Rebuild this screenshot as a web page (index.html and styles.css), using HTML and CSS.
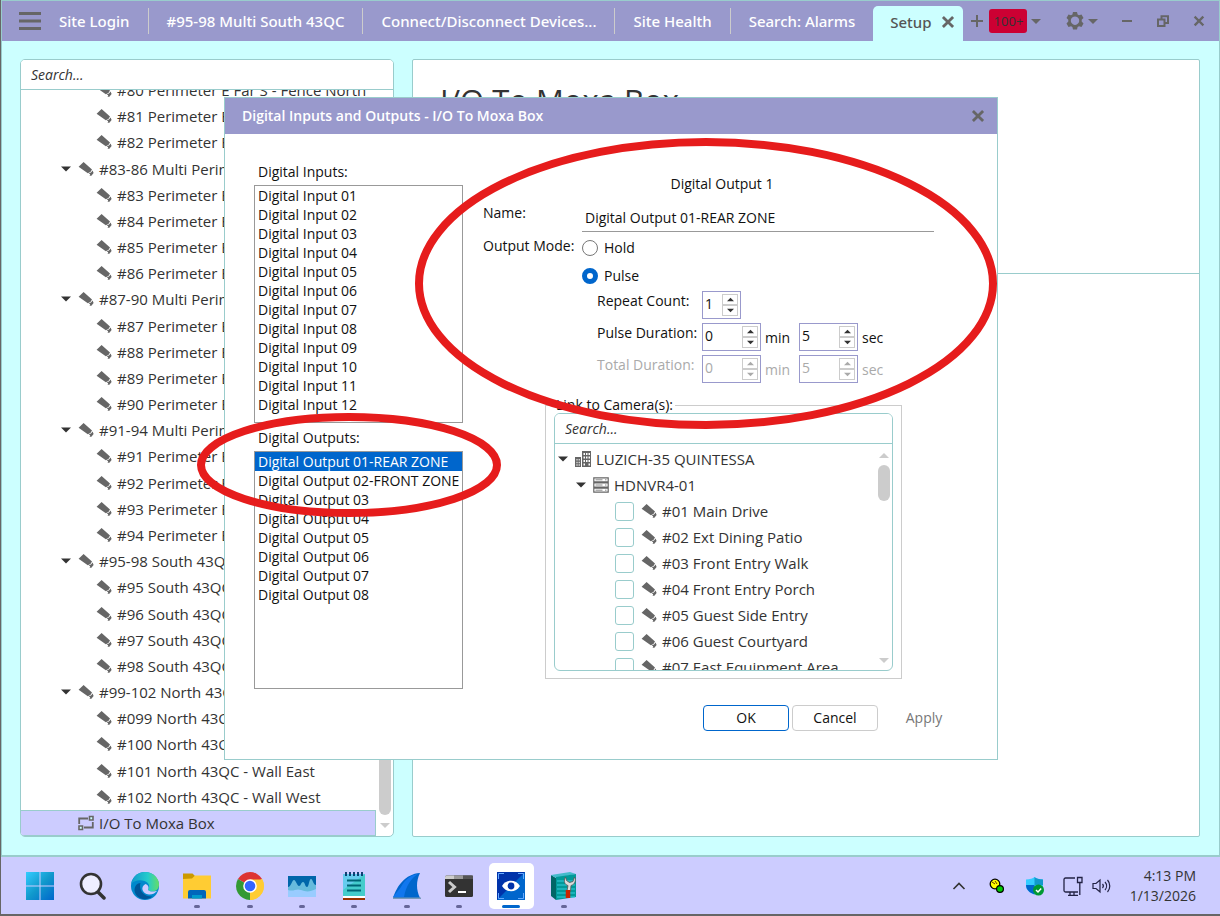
FILE: index.html
```html
<!DOCTYPE html>
<html lang="en">
<head>
<meta charset="utf-8">
<meta name="viewport" content="width=device-width, initial-scale=1">
<title>Setup</title>
<link rel="stylesheet" href="styles.css">
</head>
<body>
<svg class="sprite" aria-hidden="true">
  <symbol id="cam" viewBox="0 0 16 16"><path d="M5.600 1 L14 8.600 L12.400 11 L9.800 12.200 L.6 5.800 Z M14.600 9.600 L15.600 12 L13.400 14.800 L11.600 14.800 L12.200 13.200 L10.600 12.600 L13 11.600 Z" fill="#666"/></symbol>
  <symbol id="caret" viewBox="0 0 10 6"><path d="M0 .5H10L5 5.500Z"/></symbol>
  <symbol id="up" viewBox="0 0 10 6"><path d="M0 5.500H10L5 .5Z"/></symbol>
  <symbol id="cross" viewBox="0 0 12 12"><path d="M2.500 2.500L9.500 9.500M9.500 2.500L2.500 9.500" stroke="#666" stroke-width="2.400" stroke-linecap="square" fill="none"/></symbol>
</svg>

<div class="window">
  <header class="topbar">
    <button class="menu" aria-label="Menu"><svg width="22" height="18" viewBox="0 0 22 18"><path d="M0 1.500H22M0 9H22M0 16.500H22" stroke="#666" stroke-width="3"/></svg></button>
    <nav class="tabs">
      <a href="#">Site Login</a>
      <a href="#">#95-98 Multi South 43QC</a>
      <a href="#">Connect/Disconnect Devices...</a>
      <a href="#">Site Health</a>
      <a href="#">Search: Alarms</a>
      <a href="#" class="active">Setup <svg width="14" height="14"><use href="#cross"/></svg></a>
    </nav>
    <button class="tool" aria-label="New tab"><svg width="14" height="14" viewBox="0 0 14 14"><path d="M7 1V13M1 7H13" stroke="#666" stroke-width="2"/></svg></button>
    <button class="alarms">100+</button>
    <button class="tool caret" aria-label="Alarm list"><svg width="10" height="7"><use href="#caret"/></svg></button>
    <div class="controls">
      <button class="tool gear" aria-label="Settings"><svg width="20" height="20" viewBox="0 0 20 20"><path fill="#666" fill-rule="evenodd" d="M8 1h4l.6 2.500 1.400.8 2.500-.8 2 3.400L16.700 8.700v1.900l1.800 1.900-2 3.400-2.500-.7-1.400.8L12 18.500H8L7.400 16 6 15.200l-2.500.7-2-3.400 1.800-1.900V8.700L1.500 6.900l2-3.400 2.500.8 1.400-.8Z M10 5.500a4.200 4.200 0 1 0 .01 0Z"/></svg><svg width="10" height="7"><use href="#caret"/></svg></button>
      <button class="tool" aria-label="Minimize"><svg width="12" height="12" viewBox="0 0 12 12"><path d="M1 6H11" stroke="#666" stroke-width="2"/></svg></button>
      <button class="tool" aria-label="Restore"><svg width="14" height="14" viewBox="0 0 14 14"><path d="M2 5.500H8.500V12H2ZM5.500 5V2.200H12V9H9" stroke="#666" stroke-width="2" fill="none"/></svg></button>
      <button class="tool" aria-label="Close"><svg width="12" height="12"><use href="#cross"/></svg></button>
    </div>
  </header>

  <main class="workspace">
    <aside class="panel sidebar">
      <input class="search" type="search" placeholder="Search..." aria-label="Search sites">
      <div class="sidebody">
        <ul class="tree">
          <li><svg><use href="#cam"/></svg>#80 Perimeter E Far S - Fence North</li>
          <li><svg><use href="#cam"/></svg>#81 Perimeter E</li>
          <li><svg><use href="#cam"/></svg>#82 Perimeter E</li>
          <li class="group"><svg class="fold"><use href="#caret"/></svg><svg><use href="#cam"/></svg>#83-86 Multi Perimeter</li>
          <li><svg><use href="#cam"/></svg>#83 Perimeter E</li>
          <li><svg><use href="#cam"/></svg>#84 Perimeter E</li>
          <li><svg><use href="#cam"/></svg>#85 Perimeter E</li>
          <li><svg><use href="#cam"/></svg>#86 Perimeter E</li>
          <li class="group"><svg class="fold"><use href="#caret"/></svg><svg><use href="#cam"/></svg>#87-90 Multi Perimeter</li>
          <li><svg><use href="#cam"/></svg>#87 Perimeter E</li>
          <li><svg><use href="#cam"/></svg>#88 Perimeter E</li>
          <li><svg><use href="#cam"/></svg>#89 Perimeter E</li>
          <li><svg><use href="#cam"/></svg>#90 Perimeter E</li>
          <li class="group"><svg class="fold"><use href="#caret"/></svg><svg><use href="#cam"/></svg>#91-94 Multi Perimeter</li>
          <li><svg><use href="#cam"/></svg>#91 Perimeter E</li>
          <li><svg><use href="#cam"/></svg>#92 Perimeter E</li>
          <li><svg><use href="#cam"/></svg>#93 Perimeter E</li>
          <li><svg><use href="#cam"/></svg>#94 Perimeter E</li>
          <li class="group"><svg class="fold"><use href="#caret"/></svg><svg><use href="#cam"/></svg>#95-98 South 43QC</li>
          <li><svg><use href="#cam"/></svg>#95 South 43QC</li>
          <li><svg><use href="#cam"/></svg>#96 South 43QC</li>
          <li><svg><use href="#cam"/></svg>#97 South 43QC</li>
          <li><svg><use href="#cam"/></svg>#98 South 43QC</li>
          <li class="group"><svg class="fold"><use href="#caret"/></svg><svg><use href="#cam"/></svg>#99-102 North 43QC</li>
          <li><svg><use href="#cam"/></svg>#099 North 43QC</li>
          <li><svg><use href="#cam"/></svg>#100 North 43QC</li>
          <li><svg><use href="#cam"/></svg>#101 North 43QC - Wall East</li>
          <li><svg><use href="#cam"/></svg>#102 North 43QC - Wall West</li>
          <li class="group io"><svg viewBox="0 0 16 16"><path d="M1.200 9V3.500H10M14.800 7V12.500H6" fill="none" stroke="#666" stroke-width="1.800"/><path d="M11.500 1.500h3.500v3.500h-3.500ZM1 11h3.500v3.500H1Z" fill="#cff" stroke="#666" stroke-width="1.600"/></svg>I/O To Moxa Box</li>
        </ul>
        <div class="scroll"><span class="thumb"></span><svg width="10" height="7"><use href="#caret"/></svg></div>
      </div>
    </aside>
    <section class="panel detail"><header><h1>I/O To Moxa Box</h1></header></section>
  </main>
</div>

<section class="dialog" role="dialog" aria-labelledby="dlg-title">
  <header class="dlg-head"><h2 id="dlg-title">Digital Inputs and Outputs - I/O To Moxa Box</h2><button aria-label="Close dialog"><svg width="14" height="14"><use href="#cross"/></svg></button></header>
  <form class="dlg-body">
    <div class="lists">
      <label for="inputs">Digital Inputs:</label>
      <select id="inputs" size="12">
        <option>Digital Input 01</option><option>Digital Input 02</option><option>Digital Input 03</option><option>Digital Input 04</option><option>Digital Input 05</option><option>Digital Input 06</option><option>Digital Input 07</option><option>Digital Input 08</option><option>Digital Input 09</option><option>Digital Input 10</option><option>Digital Input 11</option><option>Digital Input 12</option>
      </select>
      <label for="outputs">Digital Outputs:</label>
      <select id="outputs" size="12">
        <option selected>Digital Output 01-REAR ZONE</option><option>Digital Output 02-FRONT ZONE</option><option>Digital Output 03</option><option>Digital Output 04</option><option>Digital Output 05</option><option>Digital Output 06</option><option>Digital Output 07</option><option>Digital Output 08</option>
      </select>
    </div>
    <div class="settings">
      <h3>Digital Output 1</h3>
      <div class="row name"><label for="name">Name:</label><input id="name" type="text" value="Digital Output 01-REAR ZONE"></div>
      <div class="row mode" role="radiogroup" aria-labelledby="mode-label">
        <span id="mode-label">Output Mode:</span>
        <div class="radios">
          <label><input type="radio" name="mode">Hold</label>
          <label><input type="radio" name="mode" checked>Pulse</label>
        </div>
      </div>
      <div class="durations">
        <div class="row"><label for="repeat">Repeat Count:</label>
          <span class="spin small"><input id="repeat" type="number" value="1"><span class="arrows"><button type="button" aria-label="Increase"><svg><use href="#up"/></svg></button><button type="button" aria-label="Decrease"><svg><use href="#caret"/></svg></button></span></span></div>
        <div class="row"><label for="pmin">Pulse Duration:</label>
          <span class="spin"><input id="pmin" type="number" value="0"><span class="arrows"><button type="button" aria-label="Increase"><svg><use href="#up"/></svg></button><button type="button" aria-label="Decrease"><svg><use href="#caret"/></svg></button></span></span>
          <span class="unit">min</span>
          <span class="spin"><input aria-label="Pulse seconds" type="number" value="5"><span class="arrows"><button type="button" aria-label="Increase"><svg><use href="#up"/></svg></button><button type="button" aria-label="Decrease"><svg><use href="#caret"/></svg></button></span></span>
          <span class="unit">sec</span></div>
        <div class="row off"><label for="tmin">Total Duration:</label>
          <span class="spin"><input id="tmin" type="number" value="0" disabled><span class="arrows"><button type="button" disabled aria-label="Increase"><svg><use href="#up"/></svg></button><button type="button" disabled aria-label="Decrease"><svg><use href="#caret"/></svg></button></span></span>
          <span class="unit">min</span>
          <span class="spin"><input aria-label="Total seconds" type="number" value="5" disabled><span class="arrows"><button type="button" disabled aria-label="Increase"><svg><use href="#up"/></svg></button><button type="button" disabled aria-label="Decrease"><svg><use href="#caret"/></svg></button></span></span>
          <span class="unit">sec</span></div>
      </div>
      <fieldset>
        <legend>Link to Camera(s):</legend>
        <div class="cameras">
          <input class="search" type="search" placeholder="Search..." aria-label="Search cameras">
          <div class="cambody">
            <ul class="camtree">
              <li class="site"><svg class="fold"><use href="#caret"/></svg><svg viewBox="0 0 16 16"><path d="M7 0h9v16H7ZM0 6h6v10H0Z" fill="#666"/><path d="M8.500 2h1.500v2H8.500zM11 2h1.500v2H11zM13.500 2H15v2h-1.500zM8.500 5.500h1.500v2H8.500zM11 5.500h1.500v2H11zM13.500 5.500H15v2h-1.500zM8.500 9h1.500v2H8.500zM11 9h1.500v2H11zM13.500 9H15v2h-1.500zM8.500 12.500h1.500v2H8.500zM13.500 12.500H15v2h-1.500zM1.500 8h1v1.500h-1zM3.700 8h1v1.500h-1zM1.500 10.700h1v1.500h-1zM3.700 10.700h1v1.500h-1zM1.500 13.300h1v1.500h-1zM3.700 13.300h1v1.500h-1z" fill="#fff"/></svg>LUZICH-35 QUINTESSA</li>
              <li class="server"><svg class="fold"><use href="#caret"/></svg><svg viewBox="0 0 16 16"><path d="M.8 .8h14.400v4H.8ZM.8 6h14.400v4H.8ZM.8 11.200h14.400v4H.8Z" fill="#fff" stroke="#666" stroke-width="1.200"/><path d="M2.500 2.800H9.500M2.500 8H9.500M2.500 13.200H9.500M12 2.800h1.500M12 8h1.500M12 13.200h1.500" stroke="#888"/></svg>HDNVR4-01</li>
              <li><label><input type="checkbox"><svg><use href="#cam"/></svg>#01 Main Drive</label></li>
              <li><label><input type="checkbox"><svg><use href="#cam"/></svg>#02 Ext Dining Patio</label></li>
              <li><label><input type="checkbox"><svg><use href="#cam"/></svg>#03 Front Entry Walk</label></li>
              <li><label><input type="checkbox"><svg><use href="#cam"/></svg>#04 Front Entry Porch</label></li>
              <li><label><input type="checkbox"><svg><use href="#cam"/></svg>#05 Guest Side Entry</label></li>
              <li><label><input type="checkbox"><svg><use href="#cam"/></svg>#06 Guest Courtyard</label></li>
              <li><label><input type="checkbox"><svg><use href="#cam"/></svg>#07 East Equipment Area</label></li>
            </ul>
            <div class="scroll"><svg width="10" height="7"><use href="#up"/></svg><span class="thumb"></span><svg class="down" width="10" height="7"><use href="#caret"/></svg></div>
          </div>
        </div>
      </fieldset>
      <div class="actions"><button type="button" class="ok">OK</button><button type="button">Cancel</button><button type="button" class="apply" disabled>Apply</button></div>
    </div>
  </form>
  <svg class="marks" viewBox="0 0 774 663" aria-hidden="true"><g fill="none" stroke="#e61c1c" stroke-width="8"><ellipse cx="482" cy="186.500" rx="287" ry="141.500"/><ellipse cx="125" cy="368" rx="148" ry="48"/></g></svg>
</section>

<footer class="taskbar">
  <div class="apps">
    <button aria-label="Start"><svg viewBox="0 0 28 28"><defs><linearGradient id="w" x1="0" y1="0" x2="1" y2="1"><stop offset="0" stop-color="#3cf"/><stop offset=".5" stop-color="#19c"/><stop offset="1" stop-color="#06c"/></linearGradient></defs><path d="M0 0H13.500V13.500H0ZM14.500 0H28V13.500H14.500ZM0 14.500H13.500V28H0ZM14.500 14.500H28V28H14.500Z" fill="url(#w)"/></svg></button>
    <button aria-label="Search"><svg viewBox="0 0 28 28"><path d="M18.500 19.500L25 26" stroke="#333" stroke-width="3.500" stroke-linecap="round"/><circle cx="12" cy="12" r="10" fill="#eef" stroke="#333" stroke-width="2.600"/></svg></button>
    <button aria-label="Edge"><svg viewBox="0 0 28 28"><defs><linearGradient id="e" x1="0" x2="1"><stop offset="0" stop-color="#19c"/><stop offset=".6" stop-color="#2cc"/><stop offset="1" stop-color="#6d6"/></linearGradient></defs><circle cx="14" cy="14" r="14" fill="#08c"/><path d="M.3 12C1.500 4 7.500 0 14 0c8 0 14 6 14 12.500 0 4.500-3 7-7 7-3.500 0-4.500-1.500-3.500-3 1.500-2 .5-6-4-7.500C8.500 7.500 3 8.500.3 12Z" fill="url(#e)"/><path d="M9.500 11C7.500 17 12 25 21.500 24.500 14 30 4.500 26.500 3.500 18.500 3.500 14 6 11 9.500 11Z" fill="#059"/><path d="M14.500 12C9 14.500 11 22 18 22.500c3.500.2 6.500-1.500 8.500-4-3 1.500-9 1.500-9.500-1 1.200-2 .5-4.500-2.500-5.500Z" fill="#ccf"/></svg></button>
    <button class="run" aria-label="File Explorer"><svg viewBox="0 0 28 28"><path d="M0 1.500H9.500L12 4V9H0Z" fill="#c90"/><path d="M0 7L9 6.500 12 3.500H28V26.500H0Z" fill="#fc3"/><path d="M5 26.500V20a2 2 0 0 1 2-2H21a2 2 0 0 1 2 2V26.500Z" fill="#06b"/><path d="M9 26.500V23H19v3.500Z" fill="#09c"/></svg></button>
    <button class="run" aria-label="Chrome"><svg viewBox="0 0 28 28"><path d="M14 14L1.900 7A14 14 0 0 1 26.100 7Z" fill="#d33"/><path d="M14 14L26.100 7A14 14 0 0 1 14 28Z" fill="#fc3"/><path d="M14 14L14 28A14 14 0 0 1 1.900 7Z" fill="#393"/><path d="M14 7.500H26.300A14 14 0 0 1 14 28L19.600 17.300Z" fill="#fc3"/><circle cx="14" cy="14" r="6.800" fill="#fff"/><circle cx="14" cy="14" r="5.300" fill="#36f"/></svg></button>
    <button class="run" aria-label="Monitor"><svg viewBox="0 0 28 28"><path d="M0 4H28V25H0Z" fill="#06a"/><path d="M0 15C3 15 4 8 6 8S9 14 11 14 13 10 15 10 17 15 19 15 21 7 23 7 25 13 28 13V25H0Z" fill="#6bd"/><path d="M0 18C6 20 8 16 13 18S22 20 28 17V25H0Z" fill="#9cf"/></svg></button>
    <button class="run" aria-label="Notepad"><svg viewBox="0 0 28 28"><path d="M3 2H25V24H3Z" fill="#4cc"/><path d="M3 2H25L3 18Z" fill="#6ce"/><path d="M6 0V4M10 0V4M14 0V4M18 0V4M22 0V4" stroke="#036" stroke-width="1.800"/><path d="M7 8.500H21M7 13.500H21M7 18.500H21" stroke="#067" stroke-width="2"/><path d="M3 24H25V26H3Z" fill="#fff"/><path d="M3 26H25V28H3Z" fill="#930"/></svg></button>
    <button class="run" aria-label="Wireshark"><svg viewBox="0 0 28 28"><path d="M0 26C4 14 12 2 27 1 23 9 23 18 27 26Z" fill="#06c"/><path d="M8 15C12 7 18 3 25 2 18 6 13 14 11 25H0Z" fill="#17e"/><path d="M0 25.500H28V27H0Z" fill="#79b"/></svg></button>
    <button class="run" aria-label="Terminal"><svg viewBox="0 0 28 28"><rect y="3.500" width="28" height="21.500" rx="1.500" fill="#333"/><path d="M0 7V5a1.500 1.500 0 0 1 1.500-1.500H9V7Z" fill="#ccc"/><path d="M9 3.500H18V7H9Z" fill="#999"/><path d="M18 3.500H28V7H18Z" fill="#555"/><path d="M4 10L9.500 15 4 20" fill="none" stroke="#ccc" stroke-width="3"/><path d="M13 20H21" stroke="#fff" stroke-width="2"/></svg></button>
    <button class="run current" aria-label="Video client"><svg viewBox="0 0 28 28"><rect width="28" height="28" fill="#03a"/><path d="M28 0V28H0Z" fill="#06c"/><path d="M1.500 7V1.500H7M21 1.500h5.500V7M26.500 21v5.500H21M7 26.500H1.500V21" fill="none" stroke="#6af"/><path d="M5 14C9 7 19 7 23 14 19 21 9 21 5 14Z" fill="#fff"/><circle cx="14" cy="14" r="3.400" fill="#03a"/></svg></button>
    <button class="run" aria-label="Server tools"><svg viewBox="0 0 28 28"><path d="M1 3L6 6V28L1 24Z" fill="#066"/><path d="M1 3L20 0 26 2 6 6Z" fill="#4bc"/><path d="M6 5L26 2V25L6 28Z" fill="#099"/><path d="M7 9H25M7 13H25M7 17H25M7 21H25M7 25H25" stroke="#3cd"/><path d="M15.500 5C13 9 15 13 18 13.500L17 19H20.500L21 13.500C25 12.500 26.500 8 24.500 5L23 9.500 19.500 10.500 16.500 8.500Z" fill="#ddd" stroke="#555" stroke-width=".8"/><path d="M18 18V26" stroke="#c20" stroke-width="4.500"/></svg></button>
  </div>
  <div class="tray">
    <button aria-label="Show hidden icons"><svg viewBox="0 0 20 20"><path d="M4.500 13L10 7.500 15.500 13" fill="none" stroke="#333" stroke-width="1.600"/></svg></button>
    <button aria-label="Status"><svg viewBox="0 0 20 20"><circle cx="8" cy="8" r="4.800" fill="#ff0" stroke="#000" stroke-width="1.300"/><path d="M5 6l3 2M8 5l2 3" stroke="#630" fill="none"/><circle cx="13" cy="13" r="3.400" fill="#0c0" stroke="#000" stroke-width="1.200"/></svg></button>
    <button aria-label="Security"><svg viewBox="0 0 20 20"><path d="M1 3.500C5 3.500 8 2.500 9.500 1 11 2.500 14 3.500 18 3.500V9C18 14 14 17 9.500 18.500 5 17 1 14 1 9Z" fill="#3cf"/><path d="M9.500 1C11 2.500 14 3.500 18 3.500V9H9.500Z" fill="#19c"/><path d="M1 9H9.500V18.500C5 17 1 14 1 9Z" fill="#06c"/><circle cx="13.500" cy="14" r="5.500" fill="#093"/><path d="M11 14L13 16 16.200 12.500" fill="none" stroke="#fff" stroke-width="1.500"/></svg></button>
    <button aria-label="Network"><svg viewBox="0 0 20 20"><path d="M12 2H2.500a1.500 1.500 0 0 0-1.500 1.500V14.500A1.500 1.500 0 0 0 2.500 16H15M7 16V19M11 16V19M5 19.300H15M14.500 1.500H19V6.500H14.500ZM16.800 6.500V19" fill="none" stroke="#224" stroke-width="1.300"/></svg></button>
    <button aria-label="Volume"><svg viewBox="0 0 20 20"><path d="M1 7.500H4L8 4V16L4 12.500H1ZM10.500 8a3 3 0 0 1 0 4M13 6a6 6 0 0 1 0 8M15.500 4a9 9 0 0 1 0 12" fill="none" stroke="#224" stroke-width="1.200"/></svg></button>
    <div class="clock"><time>4:13 PM</time><time>1/13/2026</time></div>
  </div>
</footer>
</body>
</html>
```
FILE: styles.css
```css
*, *::before, *::after { box-sizing: border-box; }

body {
  margin: 0;
  min-height: 100vh;
  display: flex;
  flex-direction: column;
  position: relative;
  border-left: 1px solid #666;
  border-bottom: 2px solid #666;
  background: #ccf;
  color: #333;
  font: 14px/20px "Open Sans", "Noto Sans", sans-serif;
}

button, input, select { font: inherit; color: inherit; }
button { border: 0; padding: 0; background: none; }
ul { list-style: none; margin: 0; padding: 0; }
h1, h2, h3 { margin: 0; font-weight: 400; }
a { color: inherit; text-decoration: none; }
svg { flex: none; fill: #666; }
.sprite { display: none; }

.window {
  flex: 1;
  display: flex;
  flex-direction: column;
  border: 1px solid #9cc;
  border-bottom-width: 2px;
  background: #cff;
}

/* Top bar */
.topbar { display: flex; align-items: center; height: 40px; background: #99c; }
.menu { display: flex; margin-left: 17px; }
.tabs { display: flex; align-self: stretch; align-items: center; color: #fff; font-family: "Noto Sans", "Open Sans", sans-serif; font-size: 15px; font-weight: 500; }
.tabs a { padding: 3px 18px; border-right: 1px solid #ccc; white-space: nowrap; }
.tabs a:nth-child(5) { border-right: 0; }
.tabs .active {
  display: flex;
  align-items: center;
  gap: 10px;
  align-self: flex-end;
  height: 35px;
  padding: 0 8px 3px 17px;
  border: 0;
  border-radius: 5px 5px 0 0;
  background: #cff;
  color: #555;
}
.tool { display: flex; align-items: center; margin-left: 7px; }
.alarms { width: 38px; height: 24px; margin-left: 5px; border-radius: 3px; background: #c03; color: #333; font-size: 13px; }
.tool.caret { margin-left: 4px; }
.controls { display: flex; align-items: center; gap: 23px; margin-left: auto; padding-right: 14px; }
.controls .tool { margin: 0; }
.controls .gear { gap: 3px; }

/* Workspace */
.workspace { flex: 1; display: flex; gap: 18px; padding: 18px 19px 18px 18px; }
.panel { border: 1px solid #9cc; border-radius: 5px; background: #fff; overflow: hidden; }
.sidebar { width: 374px; display: flex; flex-direction: column; }
.search { display: block; width: 100%; height: 30px; padding: 0 10px; border: 0; border-bottom: 1px solid #9cc; background: #fff; font-style: italic; outline: 0; appearance: none; flex: none; }
.search::placeholder { color: #333; opacity: 1; }
.sidebody { flex: 1 1 0; min-height: 0; display: flex; align-items: flex-end; overflow: hidden; }
.tree { flex: 1; height: 759px; display: grid; grid-auto-rows: 1fr; font-size: 15px; }
.tree li { display: flex; align-items: center; gap: 5px; padding-left: 75px; white-space: nowrap; }
.tree li svg, .camtree li svg { width: 16px; height: 16px; }
.tree .group { padding-left: 40px; }
.tree li .fold, .camtree li .fold { width: 10px; height: 6px; fill: #333; }
.tree .fold + svg { margin-left: 2px; }
.tree .io { padding-left: 57px; border: 1px solid #9cc; border-left: 0; background: #ccf; }
.scroll { flex: none; width: 17px; align-self: stretch; display: flex; flex-direction: column; align-items: center; }
.scroll svg { fill: #ccc; margin: 7px 0; }
.thumb { width: 12px; border-radius: 6px; background: #ccc; }
.sidebar .thumb { flex: none; height: 300px; margin-top: auto; }
.detail { flex: 1; border-radius: 2px; }
.detail header { height: 214px; padding: 20px 27px; border-bottom: 1px solid #9cc; }
.detail h1 { font-size: 31px; line-height: 40px; }

/* Dialog */
.dialog { position: absolute; left: 223px; top: 97px; width: 774px; border: 1px solid #9cc; background: #fff; color: #111; }
.dlg-head { display: flex; align-items: center; justify-content: space-between; height: 36px; padding: 0 12px 0 17px; background: #99c; color: #fff; }
.dlg-head h2 { font-size: 14px; font-weight: 600; }
.dlg-head button { display: flex; }
.dlg-body { display: grid; grid-template-columns: 209px 1fr; gap: 20px; padding: 28px 30px 28px 29px; }
.lists { display: flex; flex-direction: column; }
.lists label { padding-left: 4px; }
.lists select { height: 238px; margin: 3px 0 5px; padding: 0; border: 1px solid #999; border-radius: 0; background: #fff; color: #111; outline: 0; overflow: hidden; }
.lists option { height: 19px; min-height: 19px; padding: 0 3px; line-height: 19px; }
.lists option:checked { background: #06c linear-gradient(#06c, #06c); color: #fff; }

.settings { display: flex; flex-direction: column; padding-top: 12px; }
.settings h3 { padding-right: 6px; font-size: 14px; text-align: center; }
.row { display: flex; align-items: flex-start; }
.name { margin-top: 9px; }
.name label, .mode > span { flex: 0 0 99px; }
.name input { width: 352px; height: 29px; padding: 0 3px; border: 0; border-bottom: 1px solid #999; background: none; outline: 0; }
.mode { margin-top: 4px; }
.radios { display: grid; gap: 8px; padding-top: 2px; }
.radios label { display: flex; align-items: center; gap: 6px; }
.radios input { appearance: none; width: 16px; height: 16px; margin: 0; border: 1px solid #777; border-radius: 50%; background: #fff; }
.radios input:checked { border: 5px solid #06c; }
.durations { display: grid; gap: 4px; margin: 5px 0 0 114px; }
.durations label { width: 105px; white-space: nowrap; }
.spin { display: flex; width: 59px; height: 28px; padding: 2px 2px 2px 0; border: 1px solid #99c; background: #fff; }
.spin.small { width: 39px; }
.spin input { flex: 1; min-width: 0; height: 20px; padding: 0 0 0 2px; border: 0; background: none; outline: 0; appearance: textfield; }
.spin input::-webkit-inner-spin-button { appearance: none; margin: 0; }
.arrows { display: grid; grid-template-rows: 11px 11px; width: 16px; }
.arrows button { display: grid; place-items: center; border: 1px solid #ccc; }
.arrows svg { width: 7px; height: 5px; fill: #333; }
.unit { width: 38px; padding: 5px 0 0 4px; }
.off, .off input { color: #aaa; }
.off .arrows svg { fill: #aaa; }

fieldset { width: 357px; margin: 12px 0 0 62px; padding: 0 8px 7px; border: 1px solid #ccc; min-width: 0; }
legend { height: 20px; padding: 0 2px; margin-bottom: -2px; }
.cameras { height: 258px; display: flex; flex-direction: column; border: 1px solid #9cc; border-radius: 6px; overflow: hidden; background: #fff; color: #333; }
.cambody { flex: 1; min-height: 0; display: flex; overflow: hidden; }
.camtree { flex: 1; padding-top: 2px; font-size: 15px; }
.camtree li { display: flex; align-items: center; gap: 5px; height: 26px; padding-left: 60px; white-space: nowrap; }
.camtree .site { padding-left: 3px; }
.camtree .server { padding-left: 21px; }
.camtree .fold + svg { margin-left: 2px; }
.camtree label { display: flex; align-items: center; gap: 5px; }
.camtree input { appearance: none; width: 19px; height: 19px; margin: 0 2px 0 0; border: 1px solid #9cc; border-radius: 3px; background: #fff; }
.cambody .thumb { height: 36px; }
.cambody .down { margin-top: auto; margin-bottom: 6px; }
.cambody .scroll svg:first-child { margin: 8px 0 6px; }

.actions { display: flex; justify-content: flex-end; gap: 3px; margin-top: 26px; }
.actions button { width: 86px; height: 26px; border: 1px solid #ccc; border-radius: 4px; background: #fff; }
.actions .ok { border-color: #06c; }
.actions .apply { border-color: transparent; color: #777; }
.marks { position: absolute; left: -1px; top: -1px; width: 774px; height: 663px; overflow: visible; pointer-events: none; }

/* Taskbar */
.taskbar { display: flex; justify-content: space-between; align-items: center; height: 57px; padding: 0 24px 0 13px; }
.apps { display: grid; grid-template-columns: repeat(11, 1fr); width: 576px; justify-items: center; }
.apps button { position: relative; display: grid; place-items: center; width: 45px; height: 46px; border-radius: 5px; }
.apps svg { width: 28px; height: 28px; }
.apps .current { background: #fff; }
.run::after { content: ""; position: absolute; bottom: 1px; left: 50%; width: 6px; height: 3px; margin-left: -3px; border-radius: 2px; background: #669; }
.apps .current::after { width: 18px; margin-left: -9px; background: #06c; }
.tray { display: flex; align-items: center; gap: 18px; }
.tray button { display: flex; }
.tray svg { width: 20px; height: 20px; }
.tray button:nth-child(5) { margin-left: -9px; }
.clock { display: grid; text-align: right; font-size: 14px; }
```
